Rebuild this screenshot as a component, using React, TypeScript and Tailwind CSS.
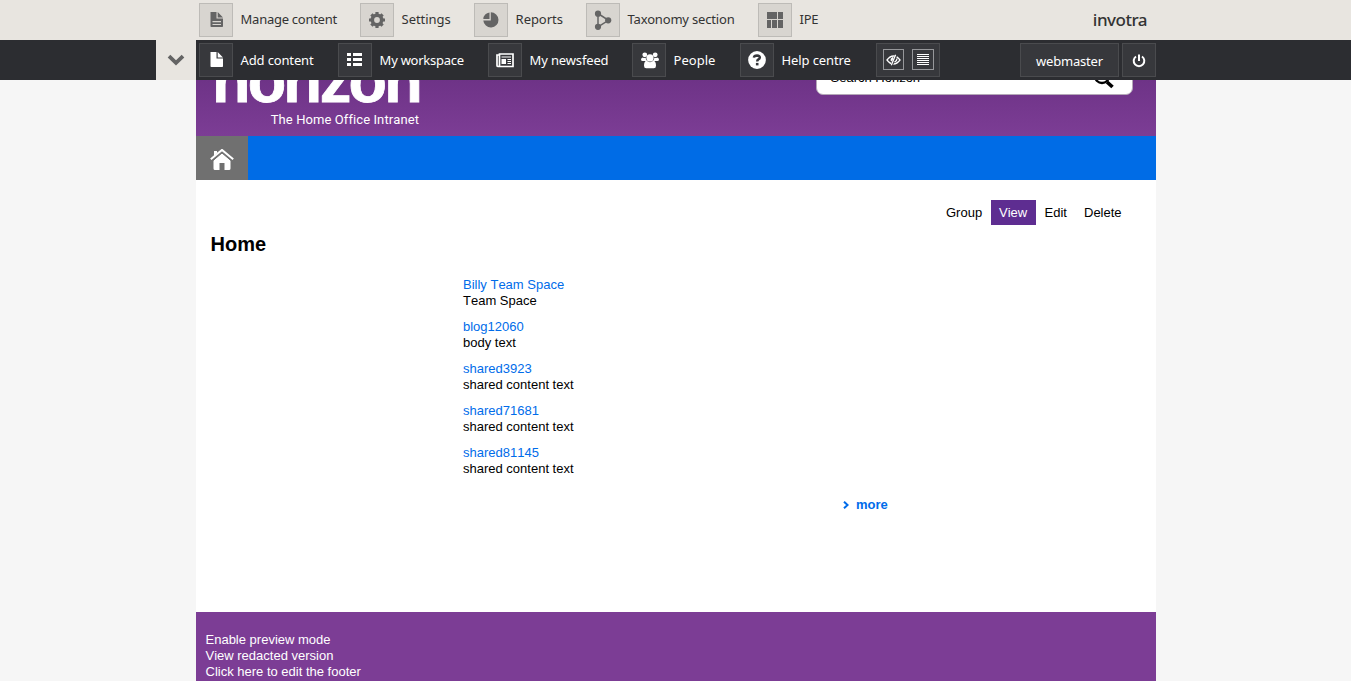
import type { ReactNode } from "react";

const box = "box-border flex h-[34px] w-[34px] shrink-0 items-center justify-center border";

function Item({ label, width, dark, tracking, children }: { label: string; width: string; dark?: boolean; tracking: string; children: ReactNode }) {
  return (
    <a className={`flex shrink-0 items-center ${width}`}>
      <span className={`${box} ${dark ? "border-[#4a4b4e] bg-[#37383c] text-white" : "border-[#bdbbb7] bg-[#d8d5d0] text-[#646464]"}`}>{children}</span>
      <span className={`ml-[7.6px] whitespace-nowrap text-[13px] leading-4 ${tracking} ${dark ? "text-white" : "mb-0.5 text-[#333]"}`}>{label}</span>
    </a>
  );
}

const Doc = ({ lines }: { lines?: boolean }) => (
  <svg width="16" height="16" viewBox="0 0 16 16" fill="currentColor" className="mr-px">
    <path d="M2.5 0H8.5V6.5H15V14.2Q15 15 14.2 15H3.3Q2.5 15 2.5 14.2ZM9.7 0L15 5.4H9.7Z" />
    {lines && <path d="M4.5 9H13V10.2H4.5ZM4.5 11.9H13V13.1H4.5Z" fill="#d8d5d0" />}
  </svg>
);

const Gear = () => (
  <svg width="18" height="18" viewBox="0 0 18 18" fill="none" stroke="currentColor">
    <circle cx="9" cy="9" r="4.7" strokeWidth="3.6" />
    <path d="M9 1V3.4M9 14.6V17M1 9H3.4M14.6 9H17M3.4 3.4L5 5M13 13L14.6 14.6M3.4 14.6L5 13M13 5L14.6 3.4" strokeWidth="3.2" />
  </svg>
);

const Pie = () => (
  <svg width="16" height="16" viewBox="0 0 16 16" fill="currentColor">
    <path d="M7.8 .3A7.6 7.6 0 1 1 .3 8.5H7.8ZM6.5 .4V7H.3A7 7 0 0 1 6.5 .4Z" />
  </svg>
);

const Nodes = () => (
  <svg width="18" height="20" viewBox="0 0 18 20" fill="currentColor">
    <path d="M4 3.5V17L14.5 10.3Z" fill="none" stroke="currentColor" strokeWidth="1.5" />
    <circle cx="4" cy="3.7" r="3.1" /><circle cx="4" cy="16.8" r="3.1" /><circle cx="14.2" cy="10.3" r="3.1" />
  </svg>
);

const Blocks = () => (
  <svg width="16" height="16" viewBox="0 0 16 16" fill="currentColor">
    <path d="M0 0H10V7H0ZM11 0H16V7H11ZM0 8H4V16H0ZM5 8H10V16H5ZM11 8H16V16H11Z" />
  </svg>
);

const List = () => (
  <svg width="16" height="14" viewBox="0 0 16 14" fill="currentColor">
    <path d="M0 0H4V3H0ZM6 0H15V3H6ZM0 5H4V8H0ZM6 5H15V8H6ZM0 10H4V13H0ZM6 10H15V13H6Z" />
  </svg>
);

const News = () => (
  <svg width="18" height="15" viewBox="0 0 18 15" fill="none" stroke="currentColor">
    <path d="M3 2H1V12.5Q1 13.5 2.2 13.5H17V1H3.5V12.5Q3.5 13.5 2.2 13.5" strokeWidth="1.7" />
    <path d="M5.5 4H15M11.5 6.5H15M11.5 8.5H15M11.5 10.5H15" strokeWidth="1.2" />
    <path d="M5.5 6H10V11H5.5Z" fill="currentColor" stroke="none" />
  </svg>
);

const People = () => (
  <svg width="18" height="17" viewBox="0 0 18 17" fill="currentColor" className="ml-px">
    <circle cx="3.8" cy="2.8" r="2.4" /><circle cx="14.2" cy="2.8" r="2.4" />
    <path d="M1.8 5.5Q4 6.5 4.7 5.5Q4.6 7.5 6 9H1.8Q0 9 0 7.5T1.8 5.5ZM16.2 5.5Q14 6.5 13.3 5.5Q13.4 7.5 12 9H16.2Q18 9 18 7.5T16.2 5.5Z" />
    <circle cx="9" cy="5.9" r="3.6" />
    <path d="M5.5 8.5Q9 12 12.5 8.5Q15 9.3 15 13.8Q15 16.3 12.8 16.3H5.2Q3 16.3 3 13.8Q3 9.3 5.5 8.5Z" />
  </svg>
);

const Help = () => (
  <svg width="18" height="18" viewBox="0 0 18 18">
    <circle cx="9" cy="9" r="8.9" fill="white" />
    <path d="M5.9 6.7Q6.2 4.5 9 4.5Q11.8 4.6 11.8 6.5Q11.8 7.7 10.4 8.4Q9.2 9 9.2 10.6" fill="none" stroke="#37383c" strokeWidth="2.5" />
    <path d="M7.9 11.9H10.5V14.4H7.9Z" fill="#37383c" />
  </svg>
);

const Eye = () => (
  <svg width="15" height="12" viewBox="0 0 15 12" fill="none" stroke="white">
    <path d="M1 6Q4 2 7.5 2T14 6Q11 10 7.5 10T1 6Z" strokeWidth="1.3" />
    <path d="M7 3.5Q4.5 4 5 6.7L7 7Z" fill="white" />
    <path d="M10.4 .5L5.6 11.5" stroke="#37383c" strokeWidth="2.4" />
    <path d="M9.6 .8L5.3 11.2M11 4.5Q11 7 8.5 8.2" strokeWidth="1.3" />
  </svg>
);

const entries = [
  ["Billy Team Space", "Team Space"],
  ["blog12060", "body text"],
  ["shared3923", "shared content text"],
  ["shared71681", "shared content text"],
  ["shared81145", "shared content text"],
];

export default function App() {
  return (
    <div className="h-[681px] w-full overflow-hidden bg-[#f6f6f6] font-['Liberation_Sans',sans-serif] text-[13px] leading-4 text-black">
      <nav className="font-['Noto_Sans',sans-serif]">
        <div className="h-10 bg-[#e8e5e0] pl-[199px]">
          <div className="flex h-10 w-[957px] items-center">
            <Item label="Manage content" width="w-[161px]" tracking="tracking-[-0.27px]"><Doc lines /></Item>
            <Item label="Settings" width="w-[114px]" tracking="tracking-[-0.05px]"><Gear /></Item>
            <Item label="Reports" width="w-[112px]" tracking="tracking-[-0.05px]"><Pie /></Item>
            <Item label="Taxonomy section" width="w-[172px]" tracking="tracking-[-0.18px]"><Nodes /></Item>
            <Item label="IPE" width="w-[80px]" tracking="tracking-[-0.3px]"><Blocks /></Item>
            <span className="mr-[9px] ml-auto text-[17px] font-medium tracking-[-0.5px] text-[#333]">invotra</span>
          </div>
        </div>
        <div className="flex h-10 bg-[#2c2d31]">
          <button className="ml-[156px] flex h-10 w-10 items-center justify-center bg-[#e8e5e0]">
            <svg width="18" height="12" viewBox="0 0 18 12" fill="none" stroke="#646464" strokeWidth="3.8"><path d="M2 2.2L9 8.8L16 2.2" /></svg>
          </button>
          <div className="ml-[3px] flex h-10 w-[957px] items-center">
            <Item dark label="Add content" width="w-[139px]" tracking="tracking-[-0.15px]"><Doc /></Item>
            <Item dark label="My workspace" width="w-[150px]" tracking="tracking-[-0.25px]"><List /></Item>
            <Item dark label="My newsfeed" width="w-[144px]" tracking="tracking-[-0.15px]"><News /></Item>
            <Item dark label="People" width="w-[108px]" tracking="tracking-[0px]"><People /></Item>
            <Item dark label="Help centre" width="w-[136px]" tracking="tracking-[-0.12px]"><Help /></Item>
            <div className="flex h-[34px] w-16 items-start gap-2 border border-[#4a4b4e] bg-[#37383c] pt-[5px] pl-1.5">
              <span className="flex h-[21px] w-[21px] items-center justify-center border border-[#96979a]"><Eye /></span>
              <span className="flex h-[21px] w-[22px] items-center justify-center border border-[#96979a]">
                <svg width="12" height="13" viewBox="0 0 12 13" stroke="white" strokeWidth="1.2"><path d="M0 1.5H12M0 3.5H12M0 5.5H12M0 7.5H12M0 9.5H12M0 11.5H12" /></svg>
              </span>
            </div>
            <a className="ml-auto flex h-[34px] w-[99px] items-center justify-center border border-[#4a4b4e] bg-[#37383c] pt-0.5 text-[13px] tracking-[-0.2px] text-white">webmaster</a>
            <a className={`${box} ml-[3px] border-[#4a4b4e] bg-[#37383c]`}>
              <svg width="14" height="14" viewBox="0 0 14 14" fill="none" stroke="white" strokeWidth="2" className="mt-0.5"><path d="M4 2.5A5.3 5.3 0 1 0 10 2.5M7 .5V7" /></svg>
            </a>
          </div>
        </div>
      </nav>
      <main className="ml-[196px] w-[960px] bg-white [font-kerning:none]">
        <header className="flex h-14 justify-between overflow-hidden bg-linear-to-b from-[#6e3387] to-[#7c3d95]">
          <div className="ml-4 w-[207px]">
            <div className="-mt-[40px] h-[72px] whitespace-nowrap text-[63px] leading-[80px] font-bold tracking-[-2.8px] text-white [-webkit-text-stroke:0.8px_white]">horizon</div>
            <div className="text-right font-['Roboto',sans-serif] text-[13px] leading-4 tracking-[0.09px] text-white">The Home Office Intranet</div>
          </div>
          <div className="mt-[-18px] mr-[23px] flex h-[33px] w-[317px] justify-between rounded-[7px] border border-[#b4a8b8] bg-white pr-[17px] pl-[13.5px]">
            <span className="mt-[7px]">Search Horizon</span>
            <svg width="22" height="22" viewBox="0 0 22 22" fill="none" stroke="black" className="mt-1"><circle cx="9" cy="9" r="7" strokeWidth="2.3" /><path d="M14 15L19.5 20" strokeWidth="3.7" /></svg>
          </div>
        </header>
        <div className="h-11 bg-[#006ce6]">
          <a className="flex h-11 w-[52px] items-center justify-center bg-[#707070]">
            <svg width="24" height="22" viewBox="0 0 24 22" className="mt-[3px]"><path d="M4 7V2H7V4M12 3.8L20.5 11.5V19.5Q20.5 21 19 21H14.5V14H9.5V21H5Q3.5 21 3.5 19.5V11.5Z" fill="white" /><path d="M3 11.5L12 4L21 11.5" fill="none" stroke="#707070" strokeWidth="1" /><path d="M.8 10.2L12 .9L23.2 10.2" fill="none" stroke="white" strokeWidth="2" /></svg>
          </a>
        </div>
        <section className="h-[432px] pt-5">
          <div className="ml-[742px] flex h-[25px] items-center">
            <a className="w-[53px] pl-2">Group</a>
            <a className="flex h-[25px] w-[45px] items-center bg-[#5e2d91] pl-2 text-white">View</a>
            <a className="w-[40px] pl-[8.5px]">Edit</a>
            <a className="pl-2">Delete</a>
          </div>
          <h1 className="mt-[7px] ml-[14.6px] text-[20px] leading-6 font-bold">Home</h1>
          <div className="mt-[21px] ml-[267px] flex flex-col gap-2.5">
            {entries.map(([title, body]) => (
              <article key={title}>
                <a className="block text-[#006cea]">{title}</a>
                <p>{body}</p>
              </article>
            ))}
          </div>
          <a className="mt-5 ml-[647px] flex items-center gap-[7px] font-bold text-[#006cea]">
            <svg width="6" height="8" viewBox="0 0 6 8" fill="none" stroke="currentColor" strokeWidth="2"><path d="M1 .7L4.6 4L1 7.3" /></svg>more
          </a>
        </section>
        <footer className="flex h-[69px] flex-col bg-[#7c3d95] pt-5 pl-[9.5px] text-white">
          <a>Enable preview mode</a><a>View redacted version</a><a>Click here to edit the footer</a>
        </footer>
      </main>
    </div>
  );
}
